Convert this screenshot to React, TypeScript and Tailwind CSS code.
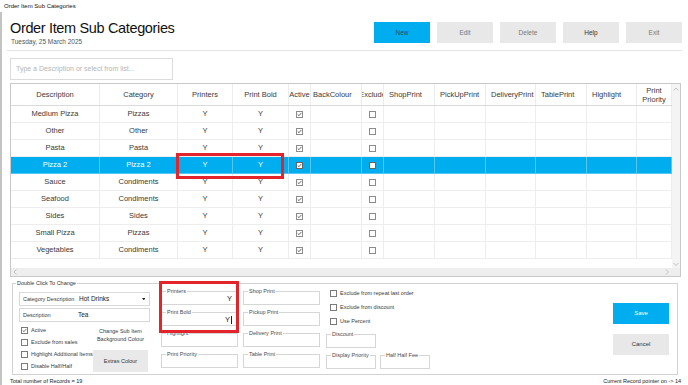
import React from "react";

const GRID_COLS =
  "grid grid-cols-[89px_78px_55px_56px_22px_51px_22px_51px_51px_50px_51px_50px_35px]";

function CheckMark({ color }: { color: string }) {
  return (
    <svg viewBox="0 0 5 5" className="absolute left-0 top-0 w-[5px] h-[5px]">
      <path d="M0.7 2.4 L2 3.7 L4.4 0.9" fill="none" stroke={color} strokeWidth="0.9" />
    </svg>
  );
}

function GridCheck({ checked, selected }: { checked: boolean; selected: boolean }) {
  return (
    <span
      className={
        selected
          ? "relative block w-[7px] h-[7px] border border-[#666] bg-white"
          : "relative block w-[7px] h-[7px] border border-[#8c8c8c] bg-white"
      }
    >
      {checked && <CheckMark color="#555" />}
    </span>
  );
}

function PanelCheck({ checked, label }: { checked?: boolean; label: string }) {
  return (
    <div className="flex items-center h-[12px]">
      <span className="relative block w-[7px] h-[7px] border border-[#7a7a7a] bg-white shrink-0">
        {checked && <CheckMark color="#666" />}
      </span>
      <span className="ml-[3px] text-[5.5px] leading-[7px] text-[#3a3a3a] whitespace-nowrap">{label}</span>
    </div>
  );
}

function Field({
  label,
  value,
  w,
  caret,
}: {
  label: string;
  value?: string;
  w: string;
  caret?: boolean;
}) {
  return (
    <fieldset className={`border border-[#d6d6d6] px-[4px] ${w}`}>
      <legend className="px-[1px] text-[5.5px] leading-[6px] text-[#4a4a4a] whitespace-nowrap">{label}</legend>
      <div className="h-[10px] flex items-center justify-end pr-[1px] text-[7.5px] leading-[10px] text-[#222]">
        {value}
        {caret && <span className="ml-[1px] block w-px h-[8px] bg-[#222]" />}
      </div>
    </fieldset>
  );
}

type Row = { desc: string; cat: string; selected?: boolean };
const rows: Row[] = [
  { desc: "Medium Pizza", cat: "Pizzas" },
  { desc: "Other", cat: "Other" },
  { desc: "Pasta", cat: "Pasta" },
  { desc: "Pizza 2", cat: "Pizza 2", selected: true },
  { desc: "Sauce", cat: "Condiments" },
  { desc: "Seafood", cat: "Condiments" },
  { desc: "Sides", cat: "Sides" },
  { desc: "Small Pizza", cat: "Pizzas" },
  { desc: "Vegetables", cat: "Condiments" },
];

const CENTER = "flex items-center justify-center text-center";
const LEFT = "flex items-center justify-start pl-[5px]";

const headers: { label: React.ReactNode; cls: string }[] = [
  { label: "Description", cls: CENTER },
  { label: "Category", cls: CENTER },
  { label: "Printers", cls: CENTER },
  { label: "Print Bold", cls: CENTER },
  { label: "Active", cls: CENTER },
  { label: "BackColour", cls: "flex items-center justify-start pl-[2px]" },
  { label: <span className="block shrink-0 mx-[-5px]">Exclude</span>, cls: CENTER },
  { label: "ShopPrint", cls: LEFT },
  { label: "PickUpPrint", cls: LEFT },
  { label: "DeliveryPrint", cls: LEFT },
  { label: "TablePrint", cls: LEFT },
  { label: "Highlight", cls: LEFT },
  {
    label: (
      <span className="leading-[9px]">
        Print
        <br />
        Priority
      </span>
    ),
    cls: CENTER,
  },
];

function Chevron({ dir }: { dir: "up" | "down" | "left" | "right" }) {
  const d =
    dir === "up"
      ? "M0.5 3.5 L3 1 L5.5 3.5"
      : dir === "down"
      ? "M0.5 1 L3 3.5 L5.5 1"
      : dir === "left"
      ? "M3.5 0.5 L1 3 L3.5 5.5"
      : "M1 0.5 L3.5 3 L1 5.5";
  const box = dir === "up" || dir === "down" ? "w-[6px] h-[4.5px]" : "w-[4.5px] h-[6px]";
  const vb = dir === "up" || dir === "down" ? "0 0 6 4.5" : "0 0 4.5 6";
  return (
    <svg viewBox={vb} className={box}>
      <path d={d} fill="none" stroke="#b4b4b4" strokeWidth="0.8" />
    </svg>
  );
}

export default function App() {
  return (
    <div className="w-[688px] h-[385px] overflow-hidden bg-white text-[#222] font-['Liberation_Sans',Arial,sans-serif]">
      {/* window title */}
      <div className="h-[12px] pl-[4px] text-[6px] leading-[12px] text-[#111]">Order Item Sub Categories</div>

      <div className="h-[373px] border-l-2 border-[#c4c4c4] flex flex-col">
        {/* header */}
        <div className="h-[38px] flex justify-between pl-[8px] pr-[6px]">
          <div className="pt-[8px]">
            <div className="text-[14.5px] leading-[17px] tracking-[-0.35px] text-[#111]">Order Item Sub Categories</div>
            <div className="mt-[1px] pl-[1px] text-[6.5px] leading-[8px] text-[#555]">Tuesday, 25 March 2025</div>
          </div>
          <div className="flex gap-[7px] pt-[10px]">
            <button className="w-[56px] h-[21px] bg-[#00aeef] text-[6.5px] text-[#2b4a66]">New</button>
            <button className="w-[56px] h-[21px] bg-[#e8e8e8] text-[6.5px] text-[#777]">Edit</button>
            <button className="w-[56px] h-[21px] bg-[#e8e8e8] text-[6.5px] text-[#777]">Delete</button>
            <button className="w-[56px] h-[21px] bg-[#e8e8e8] text-[6.5px] text-[#333]">Help</button>
            <button className="w-[56px] h-[21px] bg-[#e8e8e8] text-[6.5px] text-[#777]">Exit</button>
          </div>
        </div>
        <div className="ml-[5px] mr-[6px] h-px bg-[#e4e4e4]" />

        {/* search */}
        <div className="mt-[7px] ml-[8px] w-[163px] h-[22px] border border-[#dcdcdc] flex items-center pl-[5px] text-[7px] text-[#b5b5b5]">
          Type a Description or select from list...
        </div>

        {/* grid */}
        <div className="mt-[3px] ml-[8px] w-[671px] h-[194px] border border-[#c9c9c9] flex flex-col">
          <div className="flex h-[184px]">
            <div className="relative w-[661px] h-[184px] text-[7.5px] text-[#3a3a3a]">
              <div className={`${GRID_COLS} h-[22px] border-b border-[#dadada]`}>
                {headers.map((h, i) => (
                  <div
                    key={i}
                    className={`${h.cls} overflow-hidden whitespace-nowrap border-r border-[#ececec] leading-[9px]`}
                  >
                    {h.label}
                  </div>
                ))}
              </div>
              {rows.map((r, ri) => {
                const sel = !!r.selected;
                const cellCls = sel
                  ? "border-r border-[#55c6f3] flex items-center justify-center"
                  : "border-r border-[#ededed] flex items-center justify-center";
                return (
                  <div
                    key={ri}
                    className={
                      sel
                        ? `${GRID_COLS} h-[17px] bg-[#00aeef] text-white border-b border-[#55c6f3]`
                        : `${GRID_COLS} h-[17px] border-b border-[#ededed]`
                    }
                  >
                    <div className={cellCls}>{r.desc}</div>
                    <div className={cellCls}>{r.cat}</div>
                    <div className={cellCls}>Y</div>
                    <div className={cellCls}>Y</div>
                    <div className={cellCls}>
                      <GridCheck checked selected={sel} />
                    </div>
                    <div className={cellCls} />
                    <div className={cellCls}>
                      <GridCheck checked={false} selected={sel} />
                    </div>
                    <div className={cellCls} />
                    <div className={cellCls} />
                    <div className={cellCls} />
                    <div className={cellCls} />
                    <div className={cellCls} />
                    <div className={cellCls} />
                  </div>
                );
              })}
              <div className="pointer-events-none absolute left-[165px] top-[69px] w-[108px] h-[26px] border-[3px] border-[#e3242b]" />
            </div>
            <div className="w-[8px] h-[184px] bg-[#f4f4f4] flex flex-col items-center justify-between pt-[3px] pb-[2px]">
              <Chevron dir="up" />
              <Chevron dir="down" />
            </div>
          </div>
          <div className="flex h-[8px]">
            <div className="w-[661px] h-[8px] bg-[#eeeeee] flex items-center justify-between pl-[2px] pr-[3px]">
              <Chevron dir="left" />
              <Chevron dir="right" />
            </div>
            <div className="w-[8px] h-[8px] bg-[#eeeeee]" />
          </div>
        </div>

        {/* edit panel */}
        <fieldset className="mt-[3px] ml-[10px] w-[666px] border border-[#d2d2d2]">
          <legend className="ml-[3px] px-[1px] text-[5.5px] leading-[6px] text-[#333]">Double Click To Change</legend>
          <div className="h-[88px] flex items-start pl-[6px] pr-[8px]">
            {/* column A */}
            <div className="w-[131px] mt-[6px]">
              <div className="h-[14px] border border-[#d8d8d8] flex items-center pl-[3px] pr-[4px]">
                <span className="w-[56px] text-[5.5px] text-[#3a3a3a] whitespace-nowrap">Category Description</span>
                <span className="text-[6.5px] text-[#222]">Hot Drinks</span>
                <svg viewBox="0 0 4 3" className="ml-auto w-[3.5px] h-[2.5px]">
                  <path d="M0 0 L4 0 L2 3 Z" fill="#222" />
                </svg>
              </div>
              <div className="mt-[2px] h-[14px] border border-[#d8d8d8] flex items-center pl-[3px]">
                <span className="w-[55px] text-[5.5px] text-[#3a3a3a]">Description</span>
                <span className="text-[6.5px] text-[#222]">Tea</span>
              </div>
              <div className="mt-[2px] flex">
                <div className="w-[74px] pl-[2px]">
                  <PanelCheck checked label="Active" />
                  <PanelCheck label="Exclude from sales" />
                  <PanelCheck label="Highlight Additional Items" />
                  <PanelCheck label="Disable Half/Half" />
                </div>
                <div className="w-[55px] pt-[4px] flex flex-col items-center">
                  <div className="text-[5.5px] leading-[7.5px] text-center text-[#3a3a3a]">
                    Change Sub Item
                    <br />
                    Background Colour
                  </div>
                  <button className="mt-[7px] w-[55px] h-[22px] bg-[#e9e9e9] text-[5.5px] text-[#333]">
                    Extras Colour
                  </button>
                </div>
              </div>
            </div>

            {/* column B */}
            <div className="relative ml-[11px] mt-[2px] w-[77px] flex flex-col gap-[4px]">
              <Field label="Printers" value="Y" w="w-[77px]" />
              <Field label="Print Bold" value="Y" caret w="w-[77px]" />
              <Field label="Highlight" w="w-[77px]" />
              <Field label="Print Priority" w="w-[77px]" />
              <div className="pointer-events-none absolute -left-[2px] -top-[7px] w-[80px] h-[52px] border-[3px] border-[#e3242b]" />
            </div>

            {/* column C */}
            <div className="ml-[5px] mt-[2px] w-[77px] flex flex-col gap-[4px]">
              <Field label="Shop Print" w="w-[77px]" />
              <Field label="Pickup Print" w="w-[77px]" />
              <Field label="Delivery Print" w="w-[77px]" />
              <Field label="Table Print" w="w-[77px]" />
            </div>

            {/* column D */}
            <div className="ml-[6px] w-[104px]">
              <div className="pl-[4px] flex flex-col">
                <div className="h-[14px] flex items-center">
                  <PanelCheck label="Exclude from repeat last order" />
                </div>
                <div className="h-[14px] flex items-center">
                  <PanelCheck label="Exclude from discount" />
                </div>
                <div className="h-[14px] flex items-center">
                  <PanelCheck label="Use Percent" />
                </div>
              </div>
              <div className="mt-[3px]">
                <Field label="Discount" w="w-[50px]" />
              </div>
              <div className="mt-[4px] flex gap-[4px]">
                <Field label="Display Priority" w="w-[50px]" />
                <Field label="Half Half Fee" w="w-[50px]" />
              </div>
            </div>

            {/* column E */}
            <div className="ml-auto mt-[17px] flex flex-col gap-[10px]">
              <button className="w-[56px] h-[21px] bg-[#00aeef] text-[6px] text-white">Save</button>
              <button className="w-[56px] h-[21px] bg-[#e8e8e8] text-[6px] text-[#333]">Cancel</button>
            </div>
          </div>
        </fieldset>

        {/* footer */}
        <div className="h-[10px] pt-[1px] flex justify-between pl-[8px] pr-[7px] text-[5.5px] leading-[10px] text-[#222]">
          <span>Total number of Records = 19</span>
          <span>Current Record pointer on -&gt; 14</span>
        </div>
      </div>
    </div>
  );
}
